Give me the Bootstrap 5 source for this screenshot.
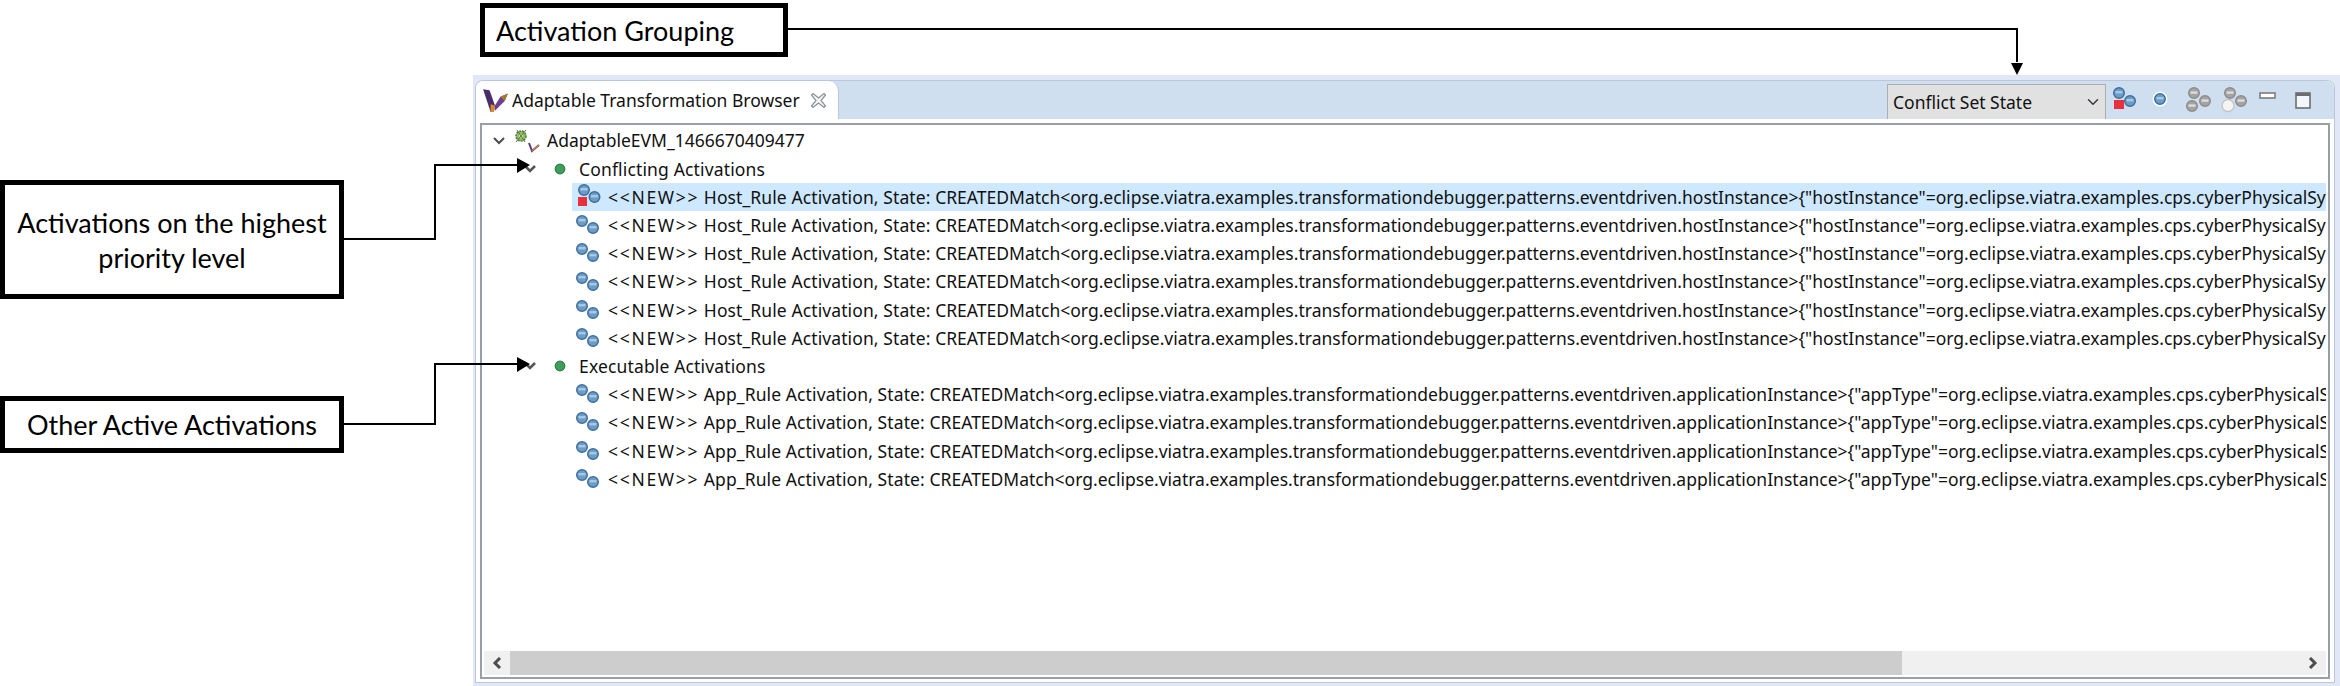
<!DOCTYPE html>
<html lang="en">
<head>
  <meta charset="UTF-8" />
  <title>Adaptable Transformation Browser</title>
  <link href="https://cdn.jsdelivr.net/npm/bootstrap@5.3.3/dist/css/bootstrap.min.css" rel="stylesheet" />
  <style>
    html, body { height: 686px; overflow: hidden; background: #fff; }
    .page { width: 2340px; height: 686px; }
    .notes-col { width: 473px; flex: none; }
    .view-col { width: 1867px; flex: none; }
    .callout {
      border: 5px solid #000; color: #000; background: #fff;
      font-family: Lato, "Liberation Sans", sans-serif; font-size: 27px; line-height: 35px;
    }
    .callout-top { width: 308px; height: 54px; margin: 3px 0 18px 7px; padding-left: 11px; }
    .callout-high { width: 344px; height: 119px; margin-top: 180px; padding: 0 4px; }
    .callout-other { width: 344px; height: 57px; margin-top: 97px; }
    .lines { position: absolute; left: 0; top: 0; pointer-events: none; }
    .view-frame { height: 611px; background: #e1e7f6; padding: 5px 5px 3px 2px; }
    .view-inner { height: 603px; border: 1px solid #b9c6dc; border-radius: 8px 8px 0 0; background: #fff; }
    .tab-bar { height: 38px; background: #cfdfef; flex: none; border-radius: 8px 8px 0 0; }
    .view-tab {
      width: 363px; height: 38px; background: #fff; border-radius: 8px 10px 0 0; padding-left: 6px;
      font-family: "Noto Sans", sans-serif; font-size: 17.5px; color: #111;
      border-right: 1px solid #b9c6dc;
    }
    .tab-label { margin-left: 3px; }
    .tab-close { margin-left: 10px; }
    .group-select.form-select {
      width: 219px; height: 35px; margin-top: 3px; padding: 0 0 0 5px; border-radius: 0;
      border: 1px solid #adadad; border-bottom: 0; background-color: #e1e1e1; box-shadow: none;
      background-position: right 4px center;
      font-family: "Noto Sans", sans-serif; font-size: 17.5px; color: #111;
    }
    .tool-icons { width: 228px; flex: none; }
    .tree-box { height: 556px; margin: 4px 4px 0 4px; border: 2px solid #999ea8; background: #fff; }
    .tree-scroll { height: 526px; padding-top: 1.5px; flex: none; }
    .tree-row {
      height: 28.2px; white-space: nowrap; font-family: "Noto Sans", sans-serif;
      font-size: 17.5px; color: #111;
    }
    .tree-row svg { flex: none; }
    .root-row { padding-left: 10px; }
    .group-row { padding-left: 41px; }
    .group-row .group-text { letter-spacing: 0.15px; }
    .leaf-row { margin-left: 90px; margin-right: 2px; overflow: hidden; }
    .leaf-row.is-picked { background: #cde8ff; }
    .leaf-text { margin-left: 2px; }
    .leaf-new { letter-spacing: 1.7px; }
    .leaf-rule { letter-spacing: 0.1px; }
    .h-scroll { height: 24px; background: #f0f0f0; margin: 0 2px 0 2px; flex: none; }
    .h-btn { width: 26px; flex: none; }
    .h-thumb { width: 1392px; background: #cdcdcd; flex: none; }
  </style>
</head>
<body class="m-0">

  <svg width="0" height="0" class="d-block">
    <defs>
      <symbol id="blue-dot" viewBox="0 0 14 14">
        <circle cx="7" cy="7" r="5.3" fill="#6d9cc6" stroke="#3c6f9e" stroke-width="1.4"/>
        <rect x="3.5" y="5" width="7" height="2.4" fill="#a9c8e2"/>
      </symbol>
      <symbol id="grey-dot" viewBox="0 0 14 14">
        <circle cx="7" cy="7" r="5.3" fill="#a4a4a4" stroke="#8c8c8c" stroke-width="1.4"/>
        <rect x="3.5" y="5.4" width="7" height="2.4" fill="#dcdcdc"/>
      </symbol>
    </defs>
  </svg>

  <div class="page d-flex">
    <div class="notes-col">
      <div class="callout callout-high d-flex align-items-center justify-content-center text-center">Activations on the highest priority level</div>
      <div class="callout callout-other d-flex align-items-center justify-content-center text-center">Other Active Activations</div>
    </div>

    <div class="view-col">
      <div class="callout callout-top d-flex align-items-center">Activation Grouping</div>

      <div class="view-frame">
        <div class="view-inner d-flex flex-column">
          <div class="tab-bar d-flex">
            <div class="view-tab d-flex align-items-center">
              <svg width="27" height="26" viewBox="0 0 25 24">
                <path d="M1 2 L7 3 L12 17 L11 23 L8 23 Z" fill="#4a2c6b"/>
                <path d="M8 16 L12 17 L11 23 L8 23 Z" fill="#d98a2b"/>
                <path d="M12 17 L17 9 L24 6 L21 13 L12 22 Z" fill="#6d3f8f"/>
                <path d="M17 9 L24 6 L21 13 Z" fill="#a7792f"/>
              </svg>
              <span class="tab-label">Adaptable Transformation Browser</span>
              <svg class="tab-close" width="17" height="17" viewBox="0 0 17 17">
                <path d="M3 1.5 L8.5 6 L14 1.5 L15.5 3 L11 8.5 L15.5 14 L14 15.5 L8.5 11 L3 15.5 L1.5 14 L6 8.5 L1.5 3 Z" fill="#f7f7f7" stroke="#8a8f94" stroke-width="1.2"/>
              </svg>
            </div>
            <select class="group-select form-select ms-auto" aria-label="Grouping">
              <option>Conflict Set State</option>
            </select>
            <svg class="tool-icons" height="38" viewBox="0 0 228 38">
              <rect x="8" y="19" width="10" height="9" fill="#e8303f"/>
              <use href="#blue-dot" x="6" y="5" width="14" height="14"/>
              <use href="#blue-dot" x="17" y="13" width="14" height="14"/>
              <circle cx="54" cy="18" r="7.4" fill="#fff"/>
              <use href="#blue-dot" x="47" y="11" width="14" height="14"/>
              <use href="#grey-dot" x="81" y="5" width="14" height="14"/>
              <use href="#grey-dot" x="92" y="13" width="14" height="14"/>
              <use href="#grey-dot" x="79" y="18" width="14" height="14"/>
              <use href="#grey-dot" x="117" y="5" width="14" height="14"/>
              <use href="#grey-dot" x="128" y="13" width="14" height="14"/>
              <circle cx="122" cy="24.5" r="6" fill="#f4f4f4" stroke="#c4c4c4" stroke-width="1.4"/>
              <rect x="154" y="12" width="15" height="5" fill="#fff" stroke="#7c7c7c" stroke-width="1.6"/>
              <rect x="190" y="12" width="14" height="15" fill="#f3f6fa" stroke="#6e6e6e" stroke-width="1.6"/>
              <rect x="190" y="12" width="14" height="3" fill="#6e6e6e"/>
            </svg>
          </div>

          <div class="tree-box d-flex flex-column">
            <div class="tree-scroll overflow-hidden">
              <ul class="list-unstyled mb-0">
                <li class="tree-row root-row d-flex align-items-center">
                  <svg width="14" height="10" viewBox="0 0 14 10"><path d="M2 2 L7 7 L12 2" fill="none" stroke="#4c4c4c" stroke-width="2"/></svg>
                  <svg class="ms-2" width="29" height="28" viewBox="0 0 29 28">
                    <circle cx="7" cy="9" r="5" fill="#8fbf5c" stroke="#4b7d3a" stroke-width="1.5" stroke-dasharray="2 1"/>
                    <circle cx="7" cy="9" r="2" fill="#d4e8b4"/>
                    <path d="M3 3 L11 15 M12 3 L2 15" stroke="#5a6f50" stroke-width="1"/>
                    <path d="M15 16 L18 24 L25 18" fill="none" stroke="#5c3a82" stroke-width="2"/>
                    <path d="M18 24 L25 18" stroke="#c98a35" stroke-width="1.2"/>
                  </svg>
                  <span class="ms-1">AdaptableEVM_1466670409477</span>
                </li>
                <li class="tree-row group-row d-flex align-items-center">
                  <svg width="14" height="10" viewBox="0 0 14 10"><path d="M2 2 L7 7 L12 2" fill="none" stroke="#555" stroke-width="2.6"/></svg>
                  <svg class="group-dot" width="38" height="14" viewBox="0 0 38 14"><circle cx="23" cy="7" r="4.8" fill="#3f9e5c" stroke="#2f7f47" stroke-width="1.2"/></svg>
                  <span class="ms-1 group-text">Conflicting Activations</span>
                </li>
                <li class="tree-row leaf-row is-picked d-flex align-items-center">
                  <svg width="34" height="28" viewBox="0 0 34 28">
                    <rect x="6" y="14" width="9" height="9" fill="#e8303f"/>
                    <use href="#blue-dot" x="5" y="0" width="14" height="14"/>
                    <use href="#blue-dot" x="15.5" y="7" width="14" height="14"/>
                  </svg>
                  <span class="leaf-text"><span class="leaf-new">&lt;&lt;NEW&gt;&gt;</span> <span class="leaf-rule">Host_Rule Activation, State: </span>CREATEDMatch&lt;org.eclipse.viatra.examples.transformationdebugger.patterns.eventdriven.hostInstance&gt;{"hostInstance"=org.eclipse.viatra.examples.cps.cyberPhysicalSystem</span>
                </li>
                <li class="tree-row leaf-row d-flex align-items-center">
                  <svg width="34" height="28" viewBox="0 0 34 28"><use href="#blue-dot" x="3" y="3" width="14" height="14"/><use href="#blue-dot" x="14" y="10" width="14" height="14"/></svg>
                  <span class="leaf-text"><span class="leaf-new">&lt;&lt;NEW&gt;&gt;</span> <span class="leaf-rule">Host_Rule Activation, State: </span>CREATEDMatch&lt;org.eclipse.viatra.examples.transformationdebugger.patterns.eventdriven.hostInstance&gt;{"hostInstance"=org.eclipse.viatra.examples.cps.cyberPhysicalSystem</span>
                </li>
                <li class="tree-row leaf-row d-flex align-items-center">
                  <svg width="34" height="28" viewBox="0 0 34 28"><use href="#blue-dot" x="3" y="3" width="14" height="14"/><use href="#blue-dot" x="14" y="10" width="14" height="14"/></svg>
                  <span class="leaf-text"><span class="leaf-new">&lt;&lt;NEW&gt;&gt;</span> <span class="leaf-rule">Host_Rule Activation, State: </span>CREATEDMatch&lt;org.eclipse.viatra.examples.transformationdebugger.patterns.eventdriven.hostInstance&gt;{"hostInstance"=org.eclipse.viatra.examples.cps.cyberPhysicalSystem</span>
                </li>
                <li class="tree-row leaf-row d-flex align-items-center">
                  <svg width="34" height="28" viewBox="0 0 34 28"><use href="#blue-dot" x="3" y="3" width="14" height="14"/><use href="#blue-dot" x="14" y="10" width="14" height="14"/></svg>
                  <span class="leaf-text"><span class="leaf-new">&lt;&lt;NEW&gt;&gt;</span> <span class="leaf-rule">Host_Rule Activation, State: </span>CREATEDMatch&lt;org.eclipse.viatra.examples.transformationdebugger.patterns.eventdriven.hostInstance&gt;{"hostInstance"=org.eclipse.viatra.examples.cps.cyberPhysicalSystem</span>
                </li>
                <li class="tree-row leaf-row d-flex align-items-center">
                  <svg width="34" height="28" viewBox="0 0 34 28"><use href="#blue-dot" x="3" y="3" width="14" height="14"/><use href="#blue-dot" x="14" y="10" width="14" height="14"/></svg>
                  <span class="leaf-text"><span class="leaf-new">&lt;&lt;NEW&gt;&gt;</span> <span class="leaf-rule">Host_Rule Activation, State: </span>CREATEDMatch&lt;org.eclipse.viatra.examples.transformationdebugger.patterns.eventdriven.hostInstance&gt;{"hostInstance"=org.eclipse.viatra.examples.cps.cyberPhysicalSystem</span>
                </li>
                <li class="tree-row leaf-row d-flex align-items-center">
                  <svg width="34" height="28" viewBox="0 0 34 28"><use href="#blue-dot" x="3" y="3" width="14" height="14"/><use href="#blue-dot" x="14" y="10" width="14" height="14"/></svg>
                  <span class="leaf-text"><span class="leaf-new">&lt;&lt;NEW&gt;&gt;</span> <span class="leaf-rule">Host_Rule Activation, State: </span>CREATEDMatch&lt;org.eclipse.viatra.examples.transformationdebugger.patterns.eventdriven.hostInstance&gt;{"hostInstance"=org.eclipse.viatra.examples.cps.cyberPhysicalSystem</span>
                </li>
                <li class="tree-row group-row d-flex align-items-center">
                  <svg width="14" height="10" viewBox="0 0 14 10"><path d="M2 2 L7 7 L12 2" fill="none" stroke="#555" stroke-width="2.6"/></svg>
                  <svg class="group-dot" width="38" height="14" viewBox="0 0 38 14"><circle cx="23" cy="7" r="4.8" fill="#3f9e5c" stroke="#2f7f47" stroke-width="1.2"/></svg>
                  <span class="ms-1 group-text">Executable Activations</span>
                </li>
                <li class="tree-row leaf-row d-flex align-items-center">
                  <svg width="34" height="28" viewBox="0 0 34 28"><use href="#blue-dot" x="3" y="3" width="14" height="14"/><use href="#blue-dot" x="14" y="10" width="14" height="14"/></svg>
                  <span class="leaf-text"><span class="leaf-new">&lt;&lt;NEW&gt;&gt;</span> <span class="leaf-rule">App_Rule Activation, State: </span>CREATEDMatch&lt;org.eclipse.viatra.examples.transformationdebugger.patterns.eventdriven.applicationInstance&gt;{"appType"=org.eclipse.viatra.examples.cps.cyberPhysicalSystem</span>
                </li>
                <li class="tree-row leaf-row d-flex align-items-center">
                  <svg width="34" height="28" viewBox="0 0 34 28"><use href="#blue-dot" x="3" y="3" width="14" height="14"/><use href="#blue-dot" x="14" y="10" width="14" height="14"/></svg>
                  <span class="leaf-text"><span class="leaf-new">&lt;&lt;NEW&gt;&gt;</span> <span class="leaf-rule">App_Rule Activation, State: </span>CREATEDMatch&lt;org.eclipse.viatra.examples.transformationdebugger.patterns.eventdriven.applicationInstance&gt;{"appType"=org.eclipse.viatra.examples.cps.cyberPhysicalSystem</span>
                </li>
                <li class="tree-row leaf-row d-flex align-items-center">
                  <svg width="34" height="28" viewBox="0 0 34 28"><use href="#blue-dot" x="3" y="3" width="14" height="14"/><use href="#blue-dot" x="14" y="10" width="14" height="14"/></svg>
                  <span class="leaf-text"><span class="leaf-new">&lt;&lt;NEW&gt;&gt;</span> <span class="leaf-rule">App_Rule Activation, State: </span>CREATEDMatch&lt;org.eclipse.viatra.examples.transformationdebugger.patterns.eventdriven.applicationInstance&gt;{"appType"=org.eclipse.viatra.examples.cps.cyberPhysicalSystem</span>
                </li>
                <li class="tree-row leaf-row d-flex align-items-center">
                  <svg width="34" height="28" viewBox="0 0 34 28"><use href="#blue-dot" x="3" y="3" width="14" height="14"/><use href="#blue-dot" x="14" y="10" width="14" height="14"/></svg>
                  <span class="leaf-text"><span class="leaf-new">&lt;&lt;NEW&gt;&gt;</span> <span class="leaf-rule">App_Rule Activation, State: </span>CREATEDMatch&lt;org.eclipse.viatra.examples.transformationdebugger.patterns.eventdriven.applicationInstance&gt;{"appType"=org.eclipse.viatra.examples.cps.cyberPhysicalSystem</span>
                </li>
              </ul>
            </div>
            <div class="h-scroll d-flex">
              <div class="h-btn d-flex align-items-center justify-content-center">
                <svg width="10" height="12" viewBox="0 0 10 12"><path d="M8 1 L3 6 L8 11" fill="none" stroke="#4d4d4d" stroke-width="3"/></svg>
              </div>
              <div class="h-thumb"></div>
              <div class="ms-auto h-btn d-flex align-items-center justify-content-center">
                <svg width="10" height="12" viewBox="0 0 10 12"><path d="M2 1 L7 6 L2 11" fill="none" stroke="#4d4d4d" stroke-width="3"/></svg>
              </div>
            </div>
          </div>
        </div>
      </div>
    </div>
  </div>

  <svg class="lines" width="2340" height="686" viewBox="0 0 2340 686">
    <path d="M788 29 H2017 V62" fill="none" stroke="#000" stroke-width="2"/>
    <path d="M2011 63 H2023 L2017 75 Z" fill="#000"/>
    <path d="M344 239 H435 V165 H518" fill="none" stroke="#000" stroke-width="2"/>
    <path d="M517 158 L530 165 L517 173 Z" fill="#000"/>
    <path d="M344 424 H435 V364 H518" fill="none" stroke="#000" stroke-width="2"/>
    <path d="M517 357 L530 364 L517 372 Z" fill="#000"/>
  </svg>

</body>
</html>
